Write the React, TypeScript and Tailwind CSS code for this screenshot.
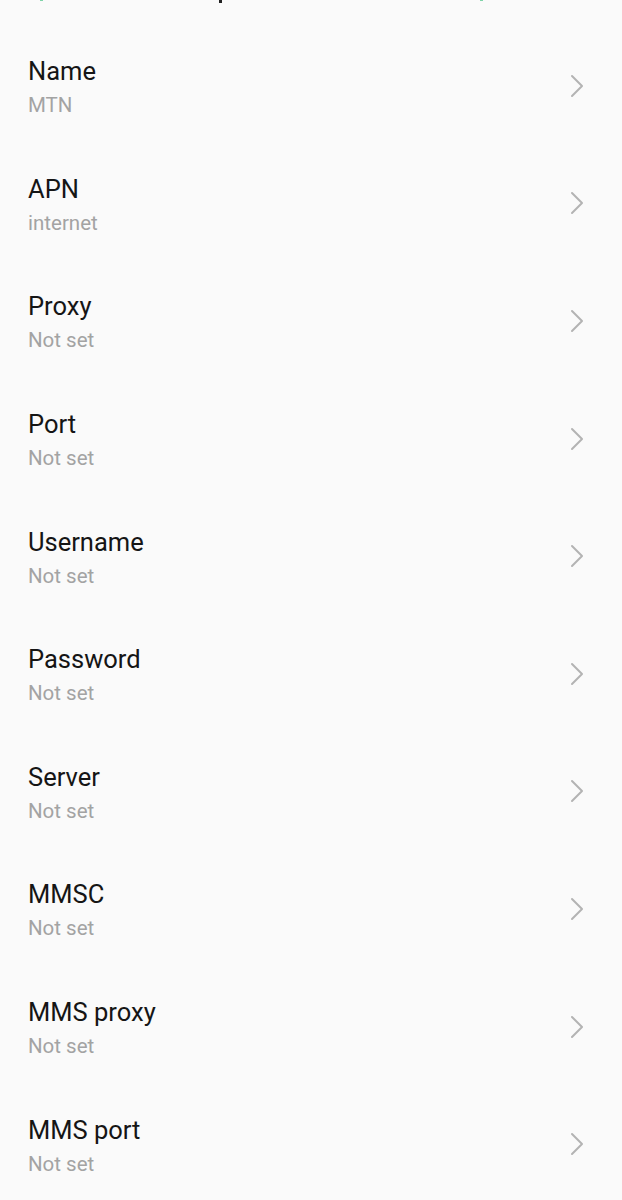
import React from 'react'

const items = [
  { title: 'Name', value: 'MTN' },
  { title: 'APN', value: 'internet' },
  { title: 'Proxy', value: 'Not set' },
  { title: 'Port', value: 'Not set' },
  { title: 'Username', value: 'Not set' },
  { title: 'Password', value: 'Not set' },
  { title: 'Server', value: 'Not set' },
  { title: 'MMSC', value: 'Not set' },
  { title: 'MMS proxy', value: 'Not set' },
  { title: 'MMS port', value: 'Not set' },
]

const Chevron: React.FC = () => (
  <svg width="14" height="24" viewBox="0 0 14 24" fill="none">
    <polyline points="2,2 12,12 2,22" stroke="#b3b3b3" strokeWidth="2" strokeLinecap="round" strokeLinejoin="round" />
  </svg>
)

const App: React.FC = () => {
  return (
    <div className="min-h-[1200px] w-[622px] bg-[#fafafa] font-['Roboto',sans-serif]">
      {/* bottom edge of the header that is cut off above */}
      <div className="flex h-[27px] items-start">
        <span className="ml-[40px] h-[1px] w-[3px] bg-[#7fd3a8]" />
        <span className="ml-[176px] h-[3px] w-[3px] bg-[#222]" />
        <span className="ml-[258px] h-[1px] w-[3px] bg-[#7fd3a8]" />
      </div>
      {items.map((item) => (
        <Row key={item.title} title={item.title} value={item.value} />
      ))}
    </div>
  )
}

interface RowProps {
  title: string
  value: string
}

const Row: React.FC<RowProps> = ({ title, value }) => {
  return (
    <div className="flex h-[117.6px] items-center pl-[28px] pr-[38px]">
      <div className="flex-1 pt-[2px]">
        <div className="text-[25.5px] leading-[30px] text-[#151515]">{title}</div>
        <div className="mt-[7px] text-[20.5px] leading-[24px] text-[#a3a3a3]">{value}</div>
      </div>
      <Chevron />
    </div>
  )
}

export default App
